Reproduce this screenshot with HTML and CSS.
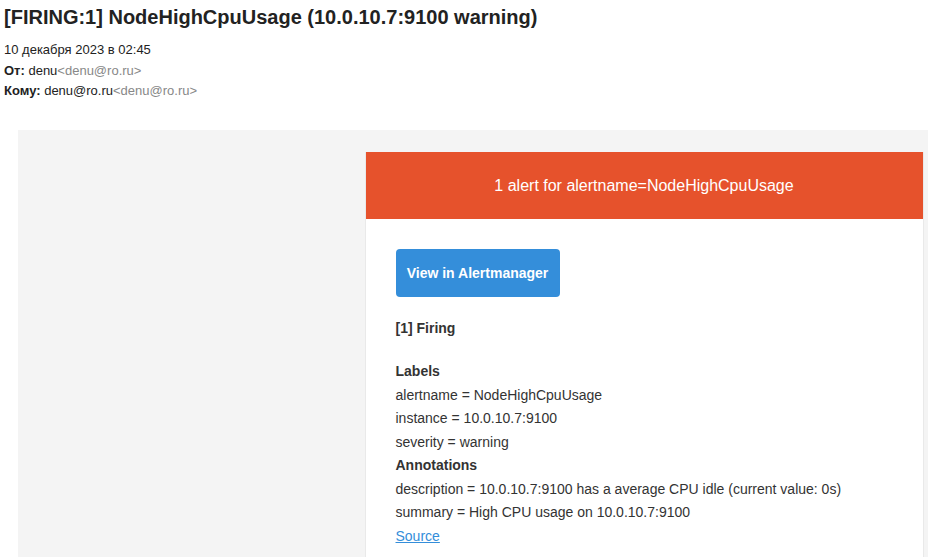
FILE: index.html
```html
<!DOCTYPE html>
<html>
<head>
<meta charset="utf-8">
<link rel="stylesheet" href="styles.css">
</head>
<body>
<div class="mail-head">
  <h1 class="subject">[FIRING:1] NodeHighCpuUsage (10.0.10.7:9100 warning)</h1>
  <div class="meta date">10 декабря 2023 в 02:45</div>
  <div class="meta"><b>От:</b> denu<span class="addr">&lt;denu@ro.ru&gt;</span></div>
  <div class="meta"><b>Кому:</b> denu@ro.ru<span class="addr">&lt;denu@ro.ru&gt;</span></div>
</div>
<div class="canvas">
  <div class="card">
    <div class="alert-head">1 alert for alertname=NodeHighCpuUsage</div>
    <div class="alert-body">
      <a class="btn" href="#">View in Alertmanager</a>
      <div class="firing"><strong>[1] Firing</strong></div>
      <div class="lines">
        <strong>Labels</strong><br>
        alertname = NodeHighCpuUsage<br>
        instance = 10.0.10.7:9100<br>
        severity = warning<br>
        <strong>Annotations</strong><br>
        description = 10.0.10.7:9100 has a average CPU idle (current value: 0s)<br>
        summary = High CPU usage on 10.0.10.7:9100<br>
        <a class="src" href="#">Source</a><br>
      </div>
    </div>
  </div>
</div>
</body>
</html>
```
FILE: styles.css
```css
html, body {
  margin: 0;
  padding: 0;
  overflow: hidden;
  background: #fff;
  font-family: Arial, "Liberation Sans", sans-serif;
}
.mail-head {
  padding: 4px 0 0 4px;
  color: #222;
}
.subject {
  margin: 0 0 10px;
  font-size: 20px;
  line-height: 26px;
  font-weight: bold;
  color: #222;
}
.meta {
  font-size: 13px;
  line-height: 20.5px;
  color: #222;
}
.meta b {
  font-weight: bold;
}
.addr {
  color: #888;
}
.canvas {
  margin: 28px 0 0 18px;
  width: 1252px;
  height: 440px;
  background: #f4f4f4;
  display: flex;
  justify-content: center;
  padding-top: 22px;
  box-sizing: border-box;
}
.card {
  width: 557px;
  align-self: flex-start;
  background: #fff;
  border: 1px solid #e9e9e9;
  border-top: none;
}
.alert-head {
  background: #e6522c;
  color: #fff;
  font-size: 16px;
  text-align: center;
  padding: 20px;
  line-height: 27px;
}
.alert-body {
  padding: 30px 30px;
  font-size: 14px;
  color: #333;
}
.btn {
  display: inline-block;
  width: 164px;
  height: 48px;
  line-height: 48px;
  text-align: center;
  background: #348eda;
  color: #fff;
  font-weight: bold;
  text-decoration: none;
  border-radius: 4px;
}
.firing {
  margin-top: 20px;
  line-height: 23.5px;
  margin-bottom: 20px;
}
.lines {
  line-height: 23.5px;
}
.src {
  color: #348eda;
  text-decoration: underline;
}
```
